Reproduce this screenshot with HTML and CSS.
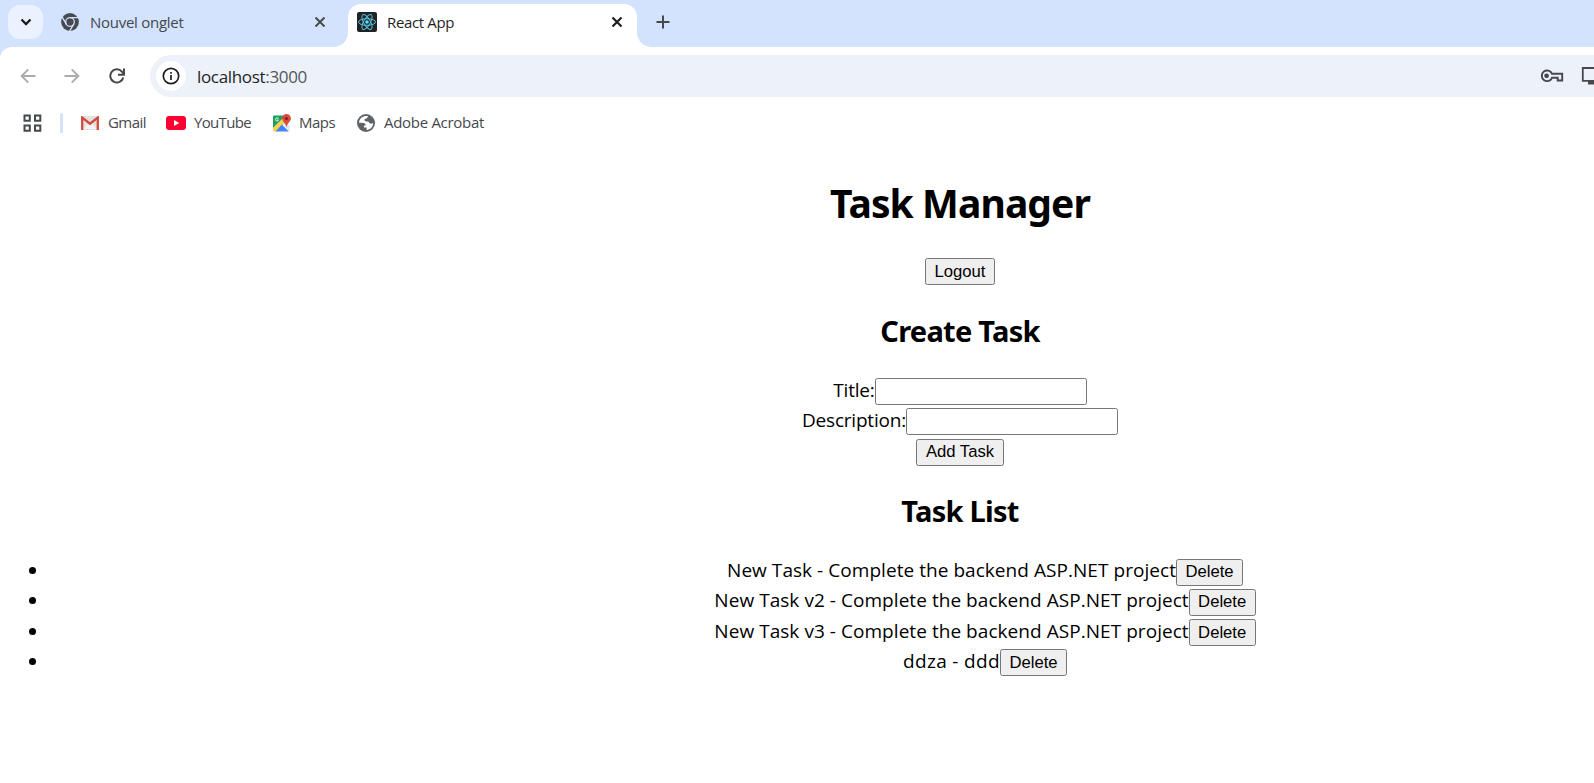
FILE: index.html
```
<!DOCTYPE html>
<html lang="en">
<head>
<meta charset="utf-8">
<title>React App</title>
<link rel="stylesheet" href="styles.css">
</head>
<body>
<header class="browser">
  <div class="tabs">
    <div class="tab-search"><svg width="12" height="8" viewBox="0 0 12 8"><path d="M1.500 1.500 6 6l4.500-4.500" fill="none" stroke="#1b1c1e" stroke-width="2.300"/></svg></div>
    <div class="tab tab-idle">
      <svg class="chrome-icon" width="18" height="18" viewBox="0 0 18 18"><circle cx="9" cy="9" r="8.900" fill="#474a4e"/><g stroke="#d3e2fd" stroke-width="1.300" fill="none"><circle cx="9" cy="9" r="4.300"/><path d="M9 4.700h8.500M5.300 11.200 1 3.800M12.700 11.200l-4.300 7.300"/></g><circle cx="9" cy="9" r="3" fill="#474a4e"/></svg>
      <span class="tab-title">Nouvel onglet</span>
      <svg class="close" width="12" height="12" viewBox="0 0 12 12"><path d="m1.500 1.500 9 9m0-9-9 9" stroke="#45484c" stroke-width="1.900"/></svg>
    </div>
    <div class="tab tab-active">
      <svg class="react-icon" width="20" height="20" viewBox="0 0 20 20"><rect width="20" height="20" rx="2" fill="#222"/><g fill="none" stroke="#53c1de" stroke-width="1"><ellipse cx="10" cy="10" rx="8.500" ry="3.300"/><ellipse cx="10" cy="10" rx="8.500" ry="3.300" transform="rotate(60 10 10)"/><ellipse cx="10" cy="10" rx="8.500" ry="3.300" transform="rotate(120 10 10)"/></g><circle cx="10" cy="10" r="1.800" fill="#61dafb"/></svg>
      <span class="tab-title">React App</span>
      <svg class="close" width="12" height="12" viewBox="0 0 12 12"><path d="m1.500 1.500 9 9m0-9-9 9" stroke="#1f1f1f" stroke-width="2.200"/></svg>
    </div>
    <svg class="new-tab" width="14" height="14" viewBox="0 0 14 14"><path d="M7 .5v13M.5 7h13" stroke="#45484c" stroke-width="2"/></svg>
  </div>
  <div class="toolbar">
    <svg class="back" width="16" height="16" viewBox="0 0 16 16"><path d="M15.500 8H2M8.300 1.300 1.600 8l6.700 6.700" fill="none" stroke="#a9abad" stroke-width="1.900"/></svg>
    <svg class="forward" width="16" height="16" viewBox="0 0 16 16"><path d="M.5 8H14M7.700 1.300 14.400 8l-6.700 6.700" fill="none" stroke="#a9abad" stroke-width="1.900"/></svg>
    <svg class="reload" width="16" height="16" viewBox="0 0 16 16"><path d="M14.300 9.600A6.600 6.600 0 1 1 12.900 3.600L14.500 5.600" fill="none" stroke="#45484c" stroke-width="2"/><path d="M15 .5v6.200H9" fill="none" stroke="#45484c" stroke-width="2"/></svg>
    <div class="omnibox">
      <div class="site-info"><svg width="18" height="18" viewBox="0 0 18 18"><circle cx="9" cy="9" r="7.700" fill="none" stroke="#1f1f1f" stroke-width="1.700"/><path d="M9 8v5M9 5v1.800" stroke="#1f1f1f" stroke-width="1.700"/></svg></div>
      <span class="url">localhost<span class="port">:3000</span></span>
      <svg class="key" width="24" height="14" viewBox="0 0 24 14"><path d="M12 4.800h10.200v6.700h-4.500V8.800H12A5.300 5.300 0 1 1 12 4.800Z" fill="none" stroke="#45484c" stroke-width="1.900"/><circle cx="6.600" cy="6.800" r="2.400" fill="#45484c"/></svg>
      <svg class="install" width="22" height="18" viewBox="0 0 22 18"><path d="M14 1H1.800v12.800H20" fill="none" stroke="#45484c" stroke-width="1.800"/><path d="M7 14h8v3.500H7z" fill="#45484c"/></svg>
    </div>
  </div>
  <div class="bookmarks">
    <svg class="apps" width="19" height="18" viewBox="0 0 19 18"><g fill="none" stroke="#45484c" stroke-width="2"><path d="M1.500 1.500h5.300v5.300H1.500zM12 1.500h5.300v5.300H12zM1.500 11.500h5.300v5.300H1.500zM12 11.500h5.300v5.300H12z"/></g></svg>
    <span class="divider"></span>
    <a class="bookmark gmail"><svg width="18" height="14" viewBox="0 0 18 14"><rect width="18" height="14" rx="1" fill="#e2e2e2"/><path d="m2 13 5-5 2 1.500L11 8l5 5z" fill="#f6f6f6"/><path d="M1.200 14V1.500L9 7.700l7.800-6.200V14" fill="none" stroke="#d54b3d" stroke-width="2.300"/></svg><span>Gmail</span></a>
    <a class="bookmark youtube"><svg width="20" height="14" viewBox="0 0 20 14"><rect width="20" height="14" rx="3" fill="#ff0033"/><path d="m8 4 5.200 3L8 10z" fill="#fff"/></svg><span>YouTube</span></a>
    <a class="bookmark maps"><svg width="18" height="18" viewBox="0 0 18 18"><path d="M0 2.500Q0 1.500 1 1.500H13L0 14z" fill="#1f9f5c"/><path d="M0 14 11 3.500l3.500 3.500L3.500 17.500H1q-1 0-1-1z" fill="#fbd04a"/><path d="M2.500 17.500 8.800 10.500 16 17.500z" fill="#4285f4"/><path d="m9.500 10 2.500-2 4.500 4v4.800z" fill="#dfe2e6"/><path d="M13.500 0A4.400 4.400 0 0 0 9.100 4.500c0 3.200 3.800 4.300 4.400 9 .6-4.700 4.400-5.800 4.400-9A4.400 4.400 0 0 0 13.500 0z" fill="#dd4b3e"/><circle cx="13.500" cy="4.500" r="1.600" fill="#7d251c"/><path d="M5.500 4H4a1.500 1.500 0 1 0 1.500 1.900H4.200" fill="none" stroke="#e8f5ee"/></svg><span>Maps</span></a>
    <a class="bookmark acrobat"><svg width="18" height="18" viewBox="0 0 18 18"><circle cx="9" cy="9" r="9" fill="#5f6368"/><path d="M2 8.700h3.200c2.200 0 3.600.8 3.600 2.700H7v2h2.600v2.700c3.800-.3 6.500-3.300 6.600-6.800-1.200-.5-1.600.6-2.800.3-1.500-.4-1-2.100-2.900-2.200-1.600 0-3.100-.1-3.100-1.500 0-1.400 2.700-.8 3-2.400.1-.7.500-1.100.9-1.400C6.800 1.200 2.200 3.800 2 8.700z" fill="#fff"/></svg><span>Adobe Acrobat</span></a>
  </div>
</header>
<main class="app">
  <h1>Task Manager</h1>
  <button class="logout">Logout</button>
  <h2>Create Task</h2>
  <form class="task-form">
    <label class="row"><span>Title:</span><input type="text"></label>
    <label class="row"><span>Description:</span><input type="text"></label>
    <div class="row"><button type="button" class="add">Add Task</button></div>
  </form>
  <h2 class="list-heading">Task List</h2>
  <ul class="tasks">
    <li class="row"><span>New Task - Complete the backend ASP.NET project</span><button class="delete">Delete</button></li>
    <li class="row"><span>New Task v2 - Complete the backend ASP.NET project</span><button class="delete">Delete</button></li>
    <li class="row"><span>New Task v3 - Complete the backend ASP.NET project</span><button class="delete">Delete</button></li>
    <li class="row short"><span>ddza - ddd</span><button class="delete">Delete</button></li>
  </ul>
</main>
</body>
</html>
```

FILE: styles.css
```
* { box-sizing: border-box; }
html, body { height: 100%; }
body { margin: 0; overflow: hidden; background: #fff; color: #000; font-family: "Open Sans", sans-serif; }
svg { display: block; flex: none; }

.browser { height: 147px; overflow: hidden; background: #d3e2fd; white-space: nowrap; }
.tabs { display: flex; height: 47px; padding-left: 8px; }
.tab-search { display: flex; align-items: center; justify-content: center; width: 35px; height: 34px; margin-top: 5px; border-radius: 12px; background: #ebf1fe; }
.tab { display: flex; align-items: center; height: 35px; margin-top: 4px; font-size: 15px; }
.tab-idle { width: 305px; padding-left: 18px; color: #45484c; letter-spacing: -.27px; }
.chrome-icon { margin-right: 11px; }
.tab-idle .tab-title { width: 224px; }
.tab-active { position: relative; width: 289px; height: 43px; padding: 0 0 8px 9px; border-radius: 13px 13px 0 0; background: #fff; color: #1f1f1f; letter-spacing: -.36px; }
.tab-active::before, .tab-active::after { content: ""; position: absolute; bottom: 0; width: 14px; height: 14px; }
.tab-active::before { left: -14px; background: radial-gradient(circle at 0 0, transparent 13.500px, #fff 14px); }
.tab-active::after { right: -14px; background: radial-gradient(circle at 100% 0, transparent 13.500px, #fff 14px); }
.react-icon { margin-right: 10px; }
.tab-active .tab-title { width: 224px; }
.new-tab { margin: 15px 0 0 19px; }

.toolbar { display: flex; align-items: center; height: 58px; padding-left: 20px; background: #fff; border-top-left-radius: 12px; }
.back { margin-right: 28px; }
.forward { margin-right: 29px; }
.reload { margin-right: 25px; }
.omnibox { display: flex; align-items: center; flex: 1; min-width: 0; height: 42px; padding-left: 6px; overflow: hidden; border-radius: 21px 0 0 21px; background: #ecf1fa; }
.site-info { display: flex; flex: none; align-items: center; justify-content: center; width: 30px; height: 30px; border-radius: 15px; background: #fff; }
.url { flex: none; width: 1354px; padding-left: 11px; font-size: 17px; letter-spacing: -.33px; color: #1f1f1f; }
.port { color: #54575b; }
.key { margin-right: 17px; }

.bookmarks { display: flex; align-items: center; height: 42px; padding: 0 0 7px 23px; background: #fff; font-size: 15px; color: #45484c; }
.divider { width: 3px; height: 20px; margin: 0 18px; border-radius: 2px; background: #d3e2fd; }
.bookmark { display: flex; align-items: center; }
.bookmark span { padding-bottom: 2px; }
.gmail { width: 85px; gap: 9px; letter-spacing: -.54px; }
.youtube { width: 107px; gap: 8px; letter-spacing: -.67px; }
.maps { width: 84px; gap: 8px; letter-spacing: -.54px; }
.acrobat { gap: 9px; letter-spacing: -.3px; }

.app { display: flex; flex-direction: column; align-items: center; width: 1920px; padding-top: 29px; font-size: 19px; white-space: nowrap; }
h1, h2 { margin: 0; font-family: "Noto Sans", sans-serif; font-weight: 700; }
h1 { font-size: 39px; line-height: 54px; letter-spacing: -.9px; }
h2 { margin: 26px 0 25.500px; font-size: 29px; line-height: 40px; letter-spacing: -.72px; }
.list-heading { margin: 24px 0 25.500px; }
button { height: 27px; padding: 0; border: 1px solid #767676; border-radius: 2.500px; background: #efefef; color: #000; font: 16.670px "Liberation Sans", Arial, sans-serif; }
.logout { width: 70px; margin-top: 28px; }
.task-form { width: 100%; }
.row { display: flex; align-items: center; justify-content: center; height: 30.300px; }
.row > span { padding-bottom: 4px; letter-spacing: -.2px; }
.row input { width: 212px; height: 27px; border: 1px solid #767676; border-radius: 2.500px; background: #fff; }
.add { width: 88px; }
.tasks { width: 100%; margin: 0; padding: 0 0 0 50px; list-style: none; }
.tasks .row::before, .tasks .row::after { content: ""; width: 7px; height: 7px; }
.tasks .row::before { margin: 0 auto 3px -21px; border-radius: 50%; background: #000; }
.tasks .row::after { margin: 0 -21px 0 auto; }
.tasks .row > span { letter-spacing: .05px; }
.tasks .short > span { letter-spacing: .34px; }
.delete { width: 67px; }
```
